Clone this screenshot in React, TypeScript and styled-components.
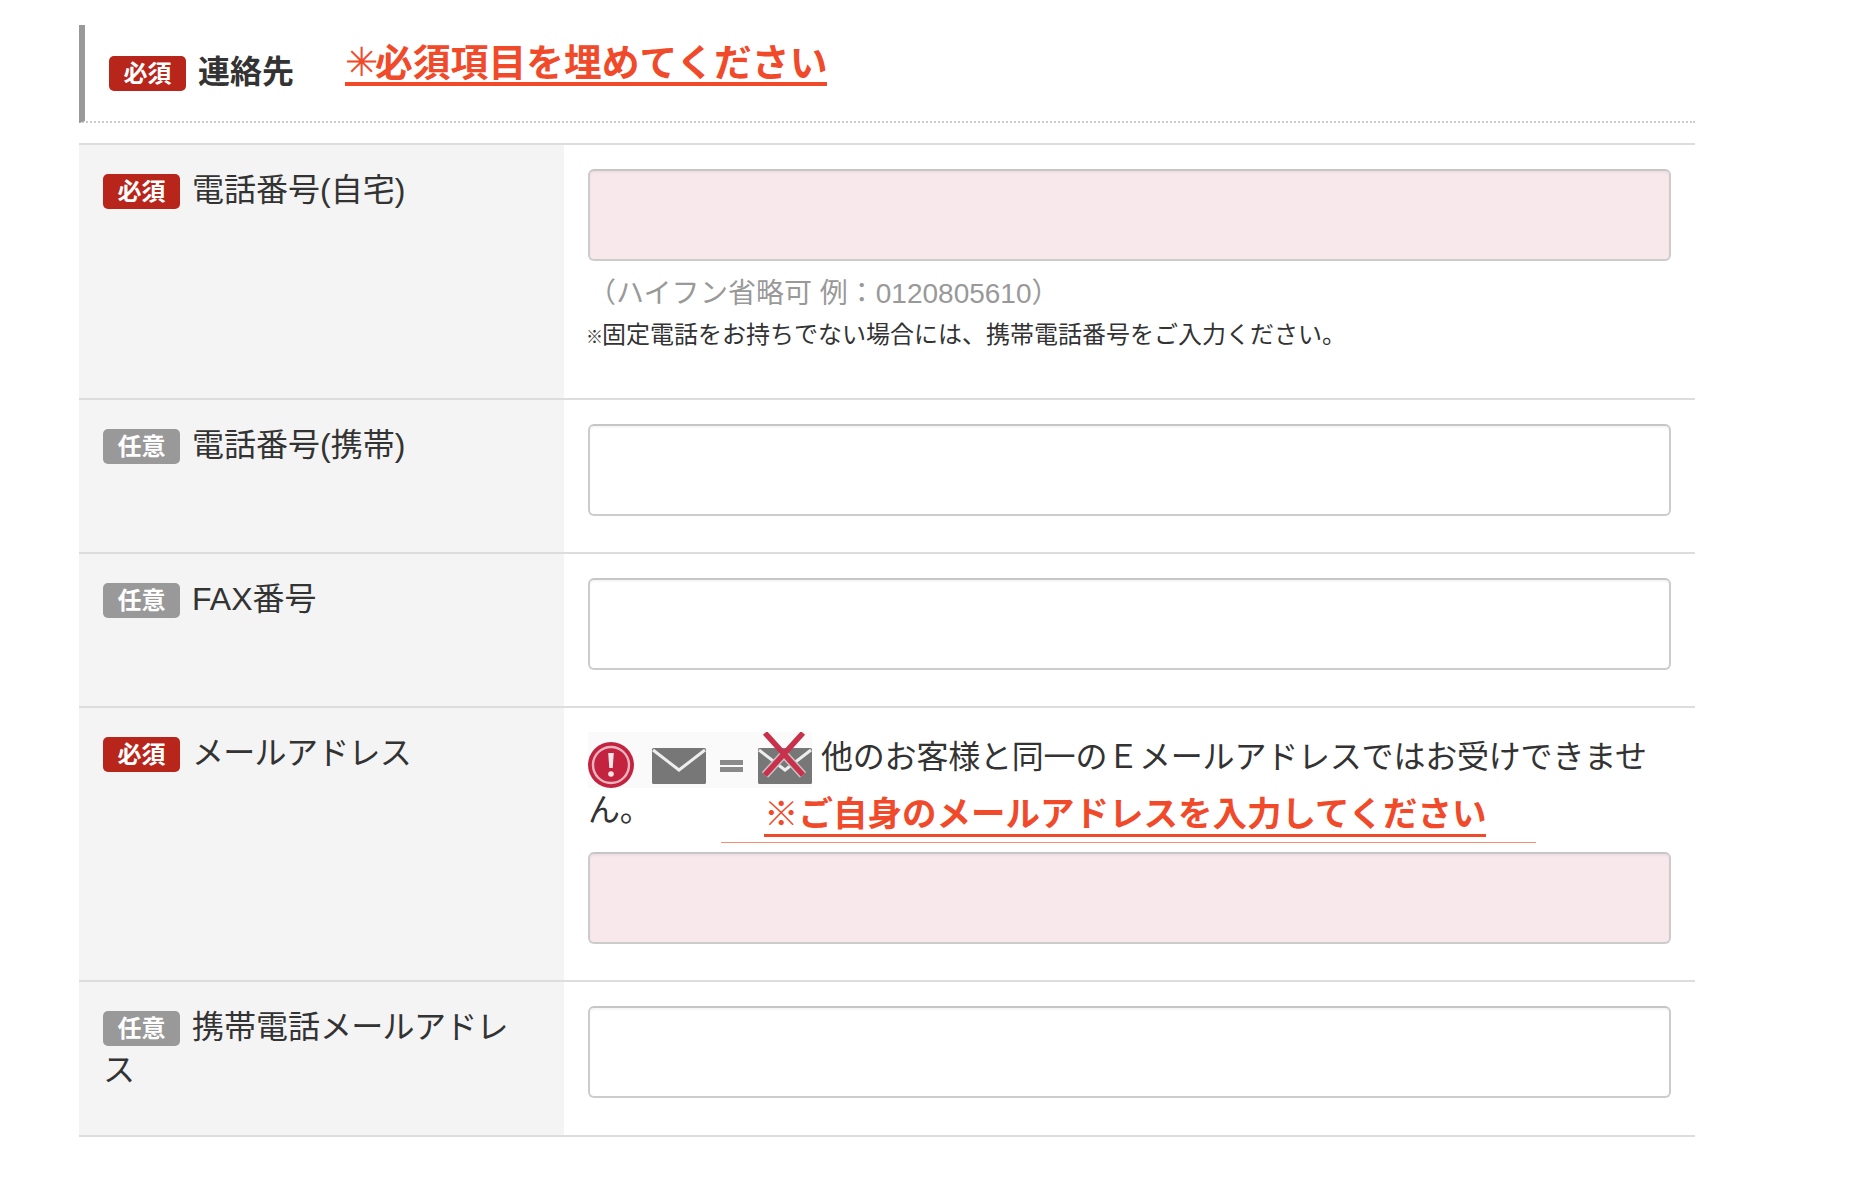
import React from "react";
import styled, { createGlobalStyle } from "styled-components";

const Global = createGlobalStyle`
  html, body { margin: 0; padding: 0; background: #fff; }
  body { font-family: "Liberation Sans", "Noto Sans CJK JP", sans-serif; color: #333; }
  * { box-sizing: border-box; }
`;

const Page = styled.div`
  width: 1616px;
  margin-left: 79px;
  padding-top: 25px;
`;

const Header = styled.header`
  display: flex;
  align-items: center;
  height: 98px;
  padding-left: 24px;
  border-left: 6px solid #999;
  border-bottom: 2px dotted #ccc;
`;

const Badge = styled.span<{ $required?: boolean }>`
  display: inline-block;
  width: 77px;
  height: 35px;
  border-radius: 5px;
  background: ${(p) => (p.$required ? "#b8251a" : "#999")};
  color: #fff;
  font-size: 24px;
  font-weight: 700;
  line-height: 35px;
  text-align: center;
  vertical-align: top;
  margin-top: 5px;
  margin-right: 12px;
`;

const HeaderBadge = styled(Badge)`
  margin-top: 0;
  flex: none;
`;

const HeaderTitle = styled.h2`
  margin: -2px 0 0;
  font-size: 32px;
  font-weight: 700;
  line-height: 44px;
  color: #333;
`;

const RequiredNote = styled.a`
  margin: -19px 0 0 51px;
  font-size: 37.8px;
  font-weight: 700;
  line-height: 44px;
  color: #f04a2a;
  border-bottom: 4px solid #f04a2a;
  height: 45px;
`;

const ThinStar = styled.span`
  display: inline-block;
  width: 30px;
  font-family: "DejaVu Sans", sans-serif;
  font-weight: 400;
  font-size: 40px;
  line-height: 30px;
  text-align: center;
`;

const Table = styled.div`
  margin-top: 20px;
  border-top: 2px solid #ddd;
`;

const Row = styled.div`
  display: grid;
  grid-template-columns: 485px 1fr;
  border-bottom: 2px solid #ddd;
`;

const LabelCell = styled.div`
  background: #f4f4f4;
  padding: 24px 32px 0 24px;
  font-size: 32px;
  line-height: 43px;
  color: #333;
`;

const Kana = styled.span`
  letter-spacing: -0.7px;
`;

const FieldCell = styled.div<{ $bottom: number }>`
  padding: 24px 24px ${(p) => p.$bottom}px;
`;

const Input = styled.input<{ $error?: boolean }>`
  display: block;
  width: 100%;
  height: 92px;
  border: 2px solid #ccc;
  border-top-color: #c6c6c6;
  border-radius: 6px;
  box-shadow: inset 0 2px 2px rgba(0, 0, 0, 0.04);
  background: ${(p) => (p.$error ? "#f8e8eb" : "#fff")};
  outline: none;
`;

const Hint = styled.p`
  margin: 12px 0 0;
  font-size: 28px;
  line-height: 42px;
  color: #999;
`;

const Note = styled.p`
  margin: -2px 0 0;
  font-size: 24px;
  line-height: 44px;
  color: #333;
`;

const SmallMark = styled.span`
  font-size: 17px;
  font-weight: 700;
  letter-spacing: -1px;
  margin-left: -2px;
`;

const Warning = styled.div`
  position: relative;
  font-size: 32px;
  line-height: 44px;
  letter-spacing: -0.2px;
  margin: 0 0 20px;
  color: #333;
`;

const WarningGraphic = styled.svg`
  display: inline-block;
  vertical-align: middle;
  width: 224px;
  height: 56px;
  margin-right: 9px;
`;

const Callout = styled.span`
  position: absolute;
  left: 176px;
  top: 62px;
  font-size: 34.5px;
  font-weight: 700;
  line-height: 40px;
  letter-spacing: 0;
  color: #f04a2a;
  white-space: nowrap;
  border-bottom: 3px solid #f04a2a;
`;

const CalloutRule = styled.span`
  position: absolute;
  left: 133px;
  top: 110px;
  width: 815px;
  height: 1px;
  background: #f98a70;
`;

const Envelope = ({ x }: { x: number }) => (
  <g>
    <rect x={x} y={16} width={54} height={36} rx={1.5} fill="#777" />
    <polyline points={`${x + 1},18 ${x + 27},38 ${x + 53},18`} fill="none" stroke="#eee" strokeWidth={3} />
  </g>
);

const MailWarning = () => (
  <WarningGraphic viewBox="0 0 224 56" aria-hidden="true">
    <rect width="224" height="56" fill="#fafafa" />
    <circle cx="23" cy="33" r="23" fill="#c4233f" />
    <circle cx="23" cy="33" r="18" fill="none" stroke="#e8b4bf" strokeWidth="2.4" />
    <path d="M20.2 21h5.6l-1.1 15h-3.4z" fill="#f6e6e9" />
    <circle cx="23" cy="42" r="2.8" fill="#f6e6e9" />
    <Envelope x={64} />
    <rect x={132} y={28} width={23} height={5} fill="#8a8a8a" />
    <rect x={132} y={35} width={23} height={5} fill="#8a8a8a" />
    <Envelope x={170} />
    <path d="M196 22L177 43M196 22L215 43" stroke="#c4c4c4" strokeWidth="8.5" fill="none" />
    <path d="M177 1L215 43M215 1L177 43" stroke="#c9304c" strokeWidth="5.5" fill="none" />
  </WarningGraphic>
);

export default function App() {
  return (
    <Page>
      <Global />
      <Header>
        <HeaderBadge $required>必須</HeaderBadge>
        <HeaderTitle>連絡先</HeaderTitle>
        <RequiredNote>
          <ThinStar>✳</ThinStar>必須項目を埋めてください
        </RequiredNote>
      </Header>
      <Table>
        <Row>
          <LabelCell>
            <Badge $required>必須</Badge>電話番号(自宅)
          </LabelCell>
          <FieldCell $bottom={38}>
            <Input $error />
            <Hint>（ハイフン省略可 例：0120805610）</Hint>
            <Note>
              <SmallMark>※</SmallMark>固定電話をお持ちでない場合には、携帯電話番号をご入力ください。
            </Note>
          </FieldCell>
        </Row>
        <Row>
          <LabelCell>
            <Badge>任意</Badge>電話番号(携帯)
          </LabelCell>
          <FieldCell $bottom={35.5}>
            <Input />
          </FieldCell>
        </Row>
        <Row>
          <LabelCell>
            <Badge>任意</Badge>FAX番号
          </LabelCell>
          <FieldCell $bottom={36}>
            <Input />
          </FieldCell>
        </Row>
        <Row>
          <LabelCell>
            <Badge $required>必須</Badge>
            <Kana>メールアドレス</Kana>
          </LabelCell>
          <FieldCell $bottom={36.5}>
            <Warning>
              <MailWarning />
              他のお客様と同一のＥメールアドレスではお受けできません。
              <Callout>※ご自身のメールアドレスを入力してください</Callout>
              <CalloutRule />
            </Warning>
            <Input $error />
          </FieldCell>
        </Row>
        <Row>
          <LabelCell>
            <Badge>任意</Badge>携帯電話<Kana>メールアドレス</Kana>
          </LabelCell>
          <FieldCell $bottom={36.5}>
            <Input />
          </FieldCell>
        </Row>
      </Table>
    </Page>
  );
}
